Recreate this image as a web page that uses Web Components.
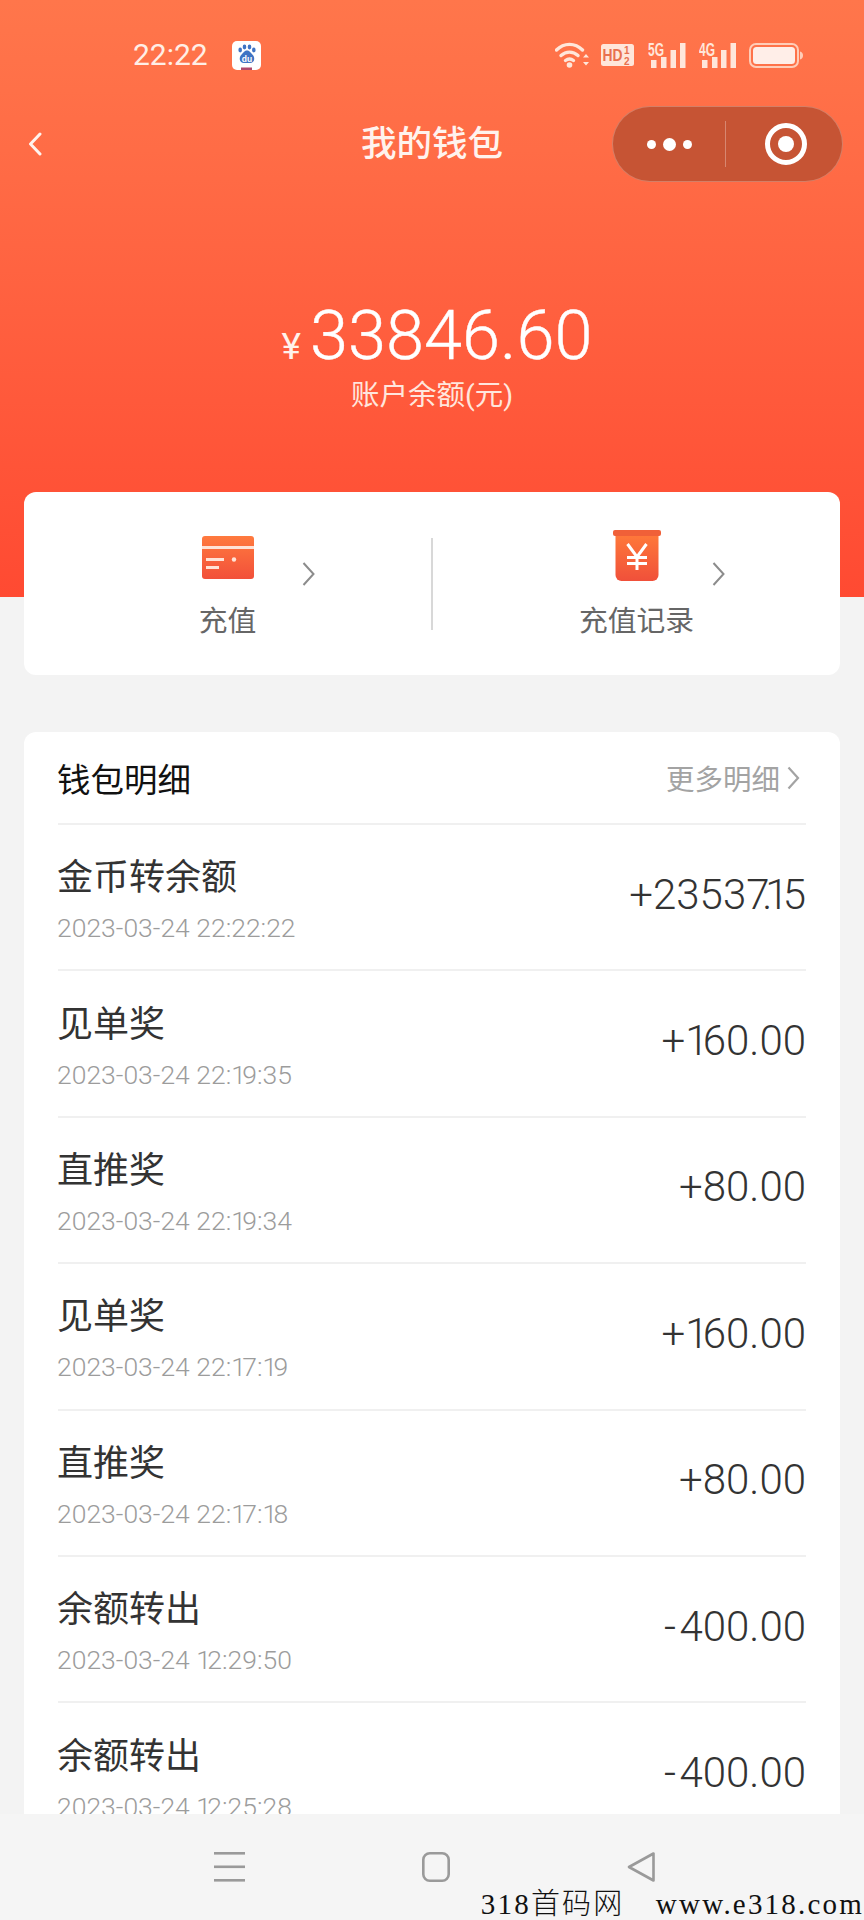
<!DOCTYPE html>
<html lang="zh">
<head>
<meta charset="utf-8">
<title>我的钱包</title>
<style>
  html, body { margin: 0; padding: 0; }
  body {
    width: 864px;
    height: 1920px;
    overflow: hidden;
    background: #f3f3f3;
    font-family: Roboto, "Noto Sans CJK SC", sans-serif;
  }
  wallet-app { height: 1920px; }
</style>
</head>
<body>
<wallet-app>
  <wallet-header slot="top">
    <status-bar slot="status" time="22:22"></status-bar>
    <title-bar slot="nav">我的钱包</title-bar>
    <balance-panel slot="balance" amount="33846.60">账户余额(元)</balance-panel>
  </wallet-header>

  <action-card slot="actions">
    <action-item slot="left" icon="card">充值</action-item>
    <action-item slot="right" icon="packet">充值记录</action-item>
  </action-card>

  <detail-card slot="details" heading="钱包明细" more="更多明细">
    <detail-row amount="+23537.15" date="2023-03-24 22:22:22">金币转余额</detail-row>
    <detail-row amount="+160.00" date="2023-03-24 22:19:35">见单奖</detail-row>
    <detail-row amount="+80.00" date="2023-03-24 22:19:34">直推奖</detail-row>
    <detail-row amount="+160.00" date="2023-03-24 22:17:19">见单奖</detail-row>
    <detail-row amount="+80.00" date="2023-03-24 22:17:18">直推奖</detail-row>
    <detail-row amount="-400.00" date="2023-03-24 12:29:50">余额转出</detail-row>
    <detail-row amount="-400.00" date="2023-03-24 12:25:28">余额转出</detail-row>
  </detail-card>

  <system-nav slot="bottom"></system-nav>
  <water-mark slot="overlay">318首码网&nbsp;&nbsp;&nbsp;www.e318.com</water-mark>
</wallet-app>

<script>
function define(name, html, extra) {
  class El extends HTMLElement {
    constructor() {
      super();
      this.attachShadow({ mode: 'open' }).innerHTML = html;
    }
    connectedCallback() {
      if (extra) extra(this, this.shadowRoot);
    }
  }
  customElements.define(name, El);
}

// the phone font has a narrow 1, a tight "7." and a long minus
function numerals(text) {
  return text
    .replace(/^-/, '<span class="minus">-</span>')
    .replace(/7\./g, '<span class="seven">7.</span>')
    .replace(/1/g, '<span class="one">1</span>');
}

define('wallet-app', `
  <style>
    :host { display: flex; flex-direction: column; position: relative; overflow: hidden; }
    .scroll { flex: 1; min-height: 0; overflow: hidden; }
    .below { display: flex; flex-direction: column; gap: 57px; padding: 0 24px; margin-top: -105px; }
    .overlay { position: absolute; right: 0; bottom: 0; }
  </style>
  <div class="scroll">
    <slot name="top"></slot>
    <div class="below">
      <slot name="actions"></slot>
      <slot name="details"></slot>
    </div>
  </div>
  <slot name="bottom"></slot>
  <div class="overlay"><slot name="overlay"></slot></div>
`);

define('wallet-header', `
  <style>
    :host {
      display: block;
      height: 597px;
      color: #fff;
      background: linear-gradient(180deg, #ff764b 0%, #ff6a45 30%, #ff4a32 100%);
    }
  </style>
  <slot name="status"></slot>
  <slot name="nav"></slot>
  <slot name="balance"></slot>
`);

define('status-bar', `
  <style>
    :host {
      display: flex;
      align-items: center;
      height: 102px;
      padding: 4px 61px 0 133px;
      color: #ffeee6;
    }
    .time { font-size: 30px; line-height: 36px; margin-right: 24px; }
    .spacer { flex: 1; }
    svg { display: block; }
    .icons { display: flex; align-items: center; }
    text { font-family: "Liberation Sans", sans-serif; font-weight: 700; }
  </style>
  <span class="time"></span>
  <svg width="29" height="29" viewBox="0 0 29 29">
    <rect width="29" height="29" rx="5" fill="#fff"/>
    <rect x="9" y="26.5" width="11" height="2.5" fill="#b0486a"/>
    <g fill="#3f74c4">
      <ellipse cx="8.2" cy="9" rx="1.8" ry="2.4"/>
      <ellipse cx="12.5" cy="6" rx="1.8" ry="2.4"/>
      <ellipse cx="17.5" cy="6" rx="1.8" ry="2.4"/>
      <ellipse cx="21.8" cy="9" rx="1.8" ry="2.4"/>
      <path d="M15 9.5c3 0 3.6 2.6 5.6 4.2 2.6 2 2.4 8.3-2.6 8.3h-6c-5 0-5.2-6.3-2.6-8.3C11.4 12.1 12 9.5 15 9.500z"/>
    </g>
    <text x="15" y="20.500" font-size="8.500" fill="#fff" text-anchor="middle">du</text>
  </svg>
  <span class="spacer"></span>
  <div class="icons">
    <svg width="35" height="26" viewBox="0 0 35 26" fill="none" stroke="#ffe6da" stroke-linecap="round" style="margin-right:11px">
      <path d="M1.500 8C9 .5 20 .5 27.500 8" stroke-width="3.400"/>
      <path d="M6 13.500c5-4.500 12-4.500 17 0" stroke-width="3.400"/>
      <path d="M10.500 18.500c2.500-2 5.500-2 8 0" stroke-width="3.400"/>
      <circle cx="14.500" cy="23" r="2.800" fill="#ffe6da" stroke="none"/>
      <path d="M28 15.500h6l-3-3.500zM28 20h6l-3 3.500z" fill="#ffe6da" stroke="none"/>
    </svg>
    <svg width="33" height="22" viewBox="0 0 33 22" style="margin-right:14px">
      <rect width="33" height="22" rx="2.500" fill="#ffe6da"/>
      <text x="1.500" y="17" font-size="17" textLength="20" lengthAdjust="spacingAndGlyphs" fill="#e8704e">HD</text>
      <text x="23" y="10" font-size="10" fill="#e8704e">1</text>
      <text x="23" y="21" font-size="10" fill="#e8704e">2</text>
    </svg>
    <svg width="38" height="31" viewBox="0 -6 38 31" style="margin:-6px 13px 0 0">
      <text x="0" y="13" font-size="18" textLength="16" lengthAdjust="spacingAndGlyphs" fill="#ffe6da">5G</text>
      <g fill="#ffe6da">
        <rect x="3" y="17" width="5.500" height="8"/><rect x="13" y="14" width="5.500" height="11"/>
        <rect x="22.500" y="7" width="5.500" height="18"/><rect x="32" y="0" width="5.500" height="25"/>
      </g>
    </svg>
    <svg width="37" height="31" viewBox="0 -6 37 31" style="margin:-6px 13px 0 0">
      <text x="0" y="13" font-size="18" textLength="16" lengthAdjust="spacingAndGlyphs" fill="#ffe6da">4G</text>
      <g fill="#ffe6da">
        <rect x="3" y="17" width="5.500" height="8"/><rect x="13" y="14" width="5.500" height="11"/>
        <rect x="22" y="7" width="5.500" height="18"/><rect x="31.500" y="0" width="5.500" height="25"/>
      </g>
    </svg>
    <svg width="54" height="25" viewBox="0 0 54 25">
      <rect x="1" y="1" width="48" height="23" rx="6" fill="none" stroke="#ffcdb8" stroke-width="2"/>
      <rect x="4" y="4" width="42" height="17" rx="3.500" fill="#ffeee8"/>
      <path d="M51 8.500c2 .5 3 2 3 4s-1 3.500-3 4z" fill="#ffcdb8"/>
    </svg>
  </div>
`, (el, root) => {
  root.querySelector('.time').textContent = el.getAttribute('time');
});

define('title-bar', `
  <style>
    :host {
      display: grid;
      grid-template-columns: 1fr auto 1fr;
      align-items: center;
      height: 74px;
      padding-right: 21px;
      padding-left: 28px;
    }
    .title { font-size: 35.500px; line-height: 48px; font-weight: 500; color: #fff3ee; margin-left: -7px; }
    .back { display: block; }
    .capsule {
      justify-self: end;
      box-sizing: border-box;
      width: 231px;
      height: 76px;
      border-radius: 38px;
      border: 1px solid rgba(255,255,255,.25);
      background: #c65434;
      display: flex;
      align-items: center;
    }
    .more { width: 112px; display: flex; justify-content: center; align-items: center; gap: 7px; }
    .more i { display: block; width: 9px; height: 9px; border-radius: 50%; background: #fff; }
    .more i.mid { width: 13px; height: 13px; }
    .sep { width: 1px; height: 46px; background: rgba(255,255,255,.3); }
    .target { flex: 1; display: flex; justify-content: center; padding-left: 3px; }
    svg { display: block; }
  </style>
  <svg class="back" width="14" height="24" viewBox="0 0 14 24" fill="none" stroke="#fff3ee" stroke-width="3" stroke-linecap="round" stroke-linejoin="round">
    <path d="M12 2 2.500 12 12 22"/>
  </svg>
  <span class="title"><slot></slot></span>
  <div class="capsule">
    <div class="more"><i></i><i class="mid"></i><i></i></div>
    <div class="sep"></div>
    <div class="target">
      <svg width="44" height="44" viewBox="0 0 44 44">
        <circle cx="22" cy="22" r="18.500" fill="none" stroke="#fff" stroke-width="5"/>
        <circle cx="22" cy="22" r="8" fill="#fff"/>
      </svg>
    </div>
  </div>
`);

define('balance-panel', `
  <style>
    :host { display: block; text-align: center; padding-top: 112px; color: #fff; }
    .amount { display: flex; justify-content: center; align-items: baseline; height: 88px; line-height: 88px; padding-left: 10px; }
    .yen { font-size: 37px; margin-right: 9px; color: #fff2ec; }
    .num { font-size: 68.500px; font-weight: 300; -webkit-text-stroke: .4px #fff; }
    .label { font-size: 28.500px; line-height: 38px; margin-top: -3px; color: #ffe6dd; font-weight: 400; }
  </style>
  <div class="amount"><span class="yen">¥</span><span class="num"></span></div>
  <div class="label"><slot></slot></div>
`, (el, root) => {
  root.querySelector('.num').textContent = el.getAttribute('amount');
});

define('action-card', `
  <style>
    :host {
      display: flex;
      align-items: center;
      box-sizing: border-box;
      height: 183px;
      background: #fff;
      border-radius: 12px;
    }
    .cell { flex: 1; min-width: 0; }
    .line { width: 2px; height: 92px; background: #d8d8d8; }
  </style>
  <div class="cell"><slot name="left"></slot></div>
  <div class="line"></div>
  <div class="cell"><slot name="right"></slot></div>
`);

const ICONS = {
  card: `
    <svg style="margin-top:-2px" width="52" height="43" viewBox="0 0 52 43">
      <defs><linearGradient id="c" x1="0" y1="0" x2="0" y2="1"><stop offset="0" stop-color="#ff7a3e"/><stop offset="1" stop-color="#f2503a"/></linearGradient></defs>
      <rect width="52" height="43" rx="3" fill="url(#c)"/>
      <rect y="10" width="52" height="3" fill="#ffe3d6"/>
      <g fill="#ffe3d6">
        <rect x="4" y="22" width="18" height="3"/><rect x="4" y="30" width="13" height="3"/>
        <circle cx="32" cy="23.500" r="2.200"/>
      </g>
    </svg>`,
  packet: `
    <svg style="margin-top:-6px" width="48" height="51" viewBox="0 0 48 51">
      <defs><linearGradient id="p" x1="0" y1="0" x2="0" y2="1"><stop offset="0" stop-color="#ff7a3a"/><stop offset="1" stop-color="#f0503a"/></linearGradient></defs>
      <path d="M2.500 3h43v42a6 6 0 0 1-6 6h-31a6 6 0 0 1-6-6z" fill="url(#p)"/>
      <rect width="48" height="6" rx="2" fill="#f06038"/>
      <g fill="none" stroke="#fff" stroke-width="3">
        <path d="M14.500 14 24 27l9.500-13M24 27v13M14 27.500h20M14 33.500h20"/>
      </g>
    </svg>`
};

define('action-item', `
  <style>
    :host { display: block; position: relative; text-align: center; color: #666; }
    .icon { height: 58px; padding-top: 3px; display: flex; align-items: center; justify-content: center; }
    svg { display: block; }
    .label { font-size: 28.800px; line-height: 40px; margin-top: 13px; font-weight: 400; }
    .arrow { position: absolute; top: 35px; }
  </style>
  <div class="icon"></div>
  <div class="label"><slot></slot></div>
  <svg class="arrow" width="13" height="24" viewBox="0 0 13 24" fill="none" stroke="#8c8c8c" stroke-width="2"><path d="M1.500 1 11.500 12 1.500 23"/></svg>
`, (el, root) => {
  const kind = el.getAttribute('icon');
  root.querySelector('.icon').innerHTML = ICONS[kind];
  root.querySelector('.arrow').style.left = kind === 'card' ? '278px' : '279px';
});

define('detail-card', `
  <style>
    :host { display: block; background: #fff; border-radius: 12px 12px 0 0; padding: 0 34px; }
    .head {
      display: flex;
      justify-content: space-between;
      align-items: center;
      height: 91px;
      border-bottom: 2px solid #f0f0f0;
    }
    .heading { font-size: 33.500px; color: #111; margin-left: -1px; }
    .more { display: flex; align-items: center; gap: 7px; font-size: 28.500px; color: #a3a3a3; margin-right: 6px; }
    svg { display: block; }
  </style>
  <div class="head">
    <span class="heading"></span>
    <span class="more"><span class="more-text"></span>
      <svg width="13" height="24" viewBox="0 0 13 24" fill="none" stroke="#a3a3a3" stroke-width="2.200"><path d="M1.500 1.500 11 12 1.500 22.500"/></svg>
    </span>
  </div>
  <slot></slot>
`, (el, root) => {
  root.querySelector('.heading').textContent = el.getAttribute('heading');
  root.querySelector('.more-text').textContent = el.getAttribute('more');
});

define('detail-row', `
  <style>
    :host {
      display: flex;
      justify-content: space-between;
      align-items: center;
      box-sizing: border-box;
      height: 146.400px;
      border-bottom: 2px solid #f0f0f0;
    }
    .left { padding-top: 6px; margin-left: -1px; }
    .name { font-size: 36px; line-height: 44px; color: #333; font-weight: 400; }
    .date { font-size: 26.500px; line-height: 32px; color: #9c9c9c; margin-top: 12px; font-weight: 300; }
    .amount { font-size: 42px; color: #333; font-weight: 300; padding-bottom: 6px; }
    .one { letter-spacing: -.14em; }
    .seven { letter-spacing: -.17em; }
    .minus { letter-spacing: .08em; }
  </style>
  <div class="left">
    <div class="name"><slot></slot></div>
    <div class="date"></div>
  </div>
  <div class="amount"></div>
`, (el, root) => {
  root.querySelector('.date').innerHTML = numerals(el.getAttribute('date'));
  root.querySelector('.amount').innerHTML = numerals(el.getAttribute('amount'));
});

define('system-nav', `
  <style>
    :host {
      display: flex;
      justify-content: center;
      gap: 177px;
      box-sizing: border-box;
      height: 106px;
      padding-top: 38px;
      padding-left: 5px;
      background: #f5f5f5;
    }
    svg { display: block; }
  </style>
  <svg width="31" height="30" viewBox="0 0 31 30" fill="#9a9a9a">
    <rect y="0" width="31" height="2.600"/><rect y="13.500" width="31" height="2.600"/><rect y="27" width="31" height="2.600"/>
  </svg>
  <svg width="28" height="30" viewBox="0 0 28 30" fill="none" stroke="#9a9a9a" stroke-width="2.600">
    <rect x="1.300" y="1.300" width="25.400" height="27.400" rx="6.500"/>
  </svg>
  <svg width="28" height="30" viewBox="0 0 28 30" fill="none" stroke="#9a9a9a" stroke-width="2.600" stroke-linejoin="round">
    <path d="M26.500 1.500v27L2 15z"/>
  </svg>
`);

define('water-mark', `
  <style>
    :host {
      display: block;
      font-family: "Liberation Serif", "Noto Sans CJK SC", serif;
      font-size: 29px;
      line-height: 32px;
      font-weight: 300;
      letter-spacing: 2.200px;
      word-spacing: 1px;
      color: #111;
      white-space: nowrap;
    }
  </style>
  <slot></slot>
`);
</script>
</body>
</html>
